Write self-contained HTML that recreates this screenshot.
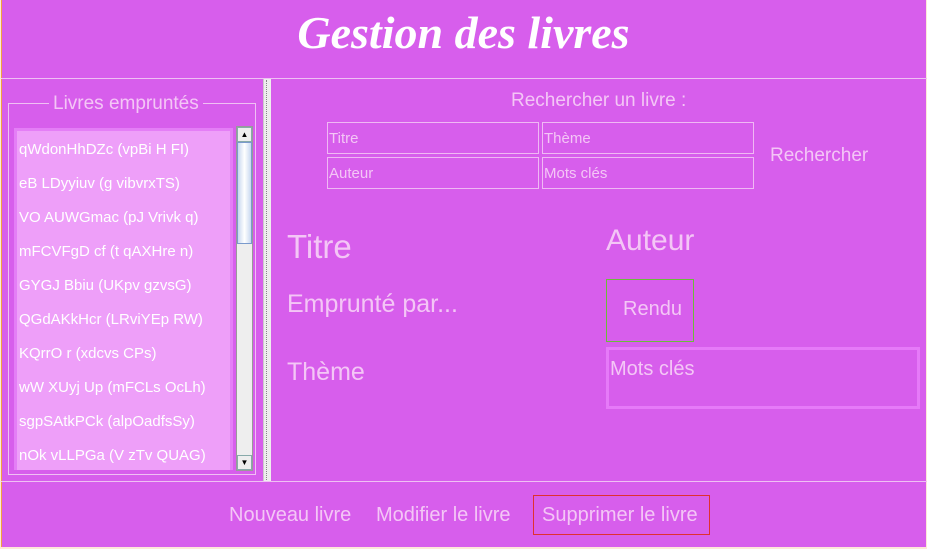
<!DOCTYPE html><html><head><style>
*{margin:0;padding:0;box-sizing:border-box}
body{width:927px;height:549px;background:#fde8d8;position:relative;overflow:hidden;font-family:"Liberation Sans",sans-serif;color:#f4c6f6}
.a{position:absolute}
.bg{left:1px;top:0;width:925px;height:547px;background:#d75eec;border-left:1px solid #f0a040}
.t{white-space:nowrap}
.inp{position:absolute;border:1px solid #f0b8f4;font-size:15px;padding:7px 1px;color:#f4c6f6}
</style></head><body>
<div class="a bg"></div>
<div class="a t" style="left:0;width:927px;top:6px;text-align:center;font-family:'Liberation Serif',serif;font-style:italic;font-weight:bold;font-size:46px;color:#fff">Gestion des livres</div>
<div class="a" style="left:1px;top:78px;width:926px;height:1px;background:#f0c0f4"></div>
<div class="a" style="left:1px;top:481px;width:926px;height:1px;background:#f0c0f4"></div>
<div class="a" style="left:263px;top:79px;width:8px;height:402px;background:#eee;border-left:1px solid #ccc"></div>
<div class="a" style="left:266px;top:80px;width:1px;height:400px;border-left:1px dotted #888"></div>
<div class="a" style="left:8px;top:103px;width:248px;height:372px;border:1px solid #f0c0f4"></div>
<div class="a t" style="left:49px;top:93px;background:#d75eec;padding:0 4px;font-size:19px">Livres empruntés</div>
<div class="a" style="left:14px;top:128px;width:219px;height:342px;background:#e47ef6"></div>
<div class="a" style="left:17px;top:131px;width:213px;height:339px;background:#ee9ff9;font-size:15px;line-height:34px;padding:2px 2px;color:#fff">
qWdonHhDZc (vpBi H FI)<br>eB LDyyiuv (g vibvrxTS)<br>VO AUWGmac (pJ Vrivk q)<br>mFCVFgD cf (t qAXHre n)<br>GYGJ Bbiu (UKpv gzvsG)<br>QGdAKkHcr (LRviYEp RW)<br>KQrrO r (xdcvs CPs)<br>wW XUyj Up (mFCLs OcLh)<br>sgpSAtkPCk (alpOadfsSy)<br>nOk vLLPGa (V zTv QUAG)</div>
<div class="a" style="left:236px;top:126px;width:17px;height:345px;background:#eee;border:1px solid #999"></div>
<div class="a" style="left:237px;top:127px;width:15px;height:15px;background:#eee;border:1px solid #8aa;font-size:8px;text-align:center;line-height:13px;color:#000">▲</div>
<div class="a" style="left:237px;top:142px;width:15px;height:102px;background:linear-gradient(90deg,#c8d8f0,#fff,#c8d8f0);border:1px solid #7a9acc"></div>
<div class="a" style="left:237px;top:455px;width:15px;height:15px;background:#eee;border:1px solid #8aa;font-size:8px;text-align:center;line-height:13px;color:#000">▼</div>
<div class="a t" style="left:511px;top:90px;font-size:19px">Rechercher un livre :</div>
<div class="inp" style="left:327px;top:122px;width:212px;height:32px">Titre</div>
<div class="inp" style="left:542px;top:122px;width:212px;height:32px">Thème</div>
<div class="inp" style="left:327px;top:157px;width:212px;height:32px">Auteur</div>
<div class="inp" style="left:542px;top:157px;width:212px;height:32px">Mots clés</div>
<div class="a t" style="left:770px;top:145px;font-size:19px">Rechercher</div>
<div class="a t" style="left:287px;top:228px;font-size:33px">Titre</div>
<div class="a t" style="left:606px;top:224px;font-size:30px">Auteur</div>
<div class="a t" style="left:287px;top:290px;font-size:25px">Emprunté par...</div>
<div class="a t" style="left:287px;top:358px;font-size:25px">Thème</div>
<div class="a" style="left:606px;top:279px;width:88px;height:63px;border:1px solid #6cbb3c"></div>
<div class="a t" style="left:623px;top:298px;font-size:20px">Rendu</div>
<div class="a" style="left:606px;top:347px;width:314px;height:62px;border:3px solid #e67af8;font-size:20px;padding:8px 1px">Mots clés</div>
<div class="a t" style="left:229px;top:504px;font-size:20px">Nouveau livre</div>
<div class="a t" style="left:376px;top:504px;font-size:20px">Modifier le livre</div>
<div class="a t" style="left:533px;top:495px;width:177px;height:40px;border:1px solid #e03030;font-size:20px;padding:8px 0 0 8px">Supprimer le livre</div>
</body></html>
